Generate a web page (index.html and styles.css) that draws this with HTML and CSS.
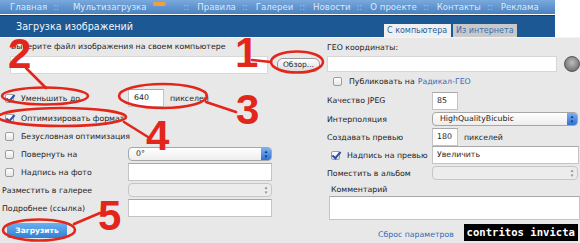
FILE: index.html
```html
<!DOCTYPE html>
<html lang="ru">

<head>
    <meta charset="UTF-8">
    <title>Загрузка изображений</title>
    <link rel="stylesheet" href="styles.css">
</head>

<body>
    <div class="page">
        <div class="topnav">
            <a>Главная</a><span class="sep">::</span>
            <a class="wide-gap">Мультизагрузка</a><span class="new">new</span><span class="sep">::</span>
            <a>Правила</a><span class="sep">::</span>
            <a>Галереи</a><span class="sep">::</span>
            <a>Новости</a><span class="sep">::</span>
            <a>О проекте</a><span class="sep">::</span>
            <a>Контакты</a><span class="sep">::</span>
            <a>Реклама</a>
        </div>

        <div class="header">
            <span class="title">Загрузка изображений</span>
            <div class="tabs">
                <span class="tab active">С компьютера</span>
                <span class="tab">Из интернета</span>
            </div>
        </div>

        <div class="panel">
            <div class="col-left">
                <div class="file-label">Выберите файл изображения на своем компьютере</div>
                <div class="file-row">
                    <span class="input file-input"></span>
                    <span class="btn-browse">Обзор...</span>
                </div>

                <div class="row first">
                    <label><span class="cb checked"></span>Уменьшить до</label>
                    <span class="input small">640</span><span class="unit">пикселей</span>
                </div>
                <div class="row">
                    <label><span class="cb checked"></span>Оптимизировать формат</label>
                </div>
                <div class="row">
                    <label><span class="cb"></span>Безусловная оптимизация</label>
                </div>
                <div class="row">
                    <label><span class="cb"></span>Повернуть на</label>
                    <span class="select wide">0°<span class="stepper">▴<br>▾</span></span>
                </div>
                <div class="row">
                    <label><span class="cb"></span>Надпись на фото</label>
                    <span class="input wide tall"></span>
                </div>
                <div class="row">
                    <label class="plain">Разместить в галерее</label>
                    <span class="select wide disabled"><span class="stepper">▴<br>▾</span></span>
                </div>
                <div class="row">
                    <label class="plain">Подробнее (ссылка)</label>
                    <span class="input wide tall"></span>
                </div>
                <div class="submit-row">
                    <span class="btn-upload">Загрузить</span>
                </div>
            </div>

            <div class="col-right">
                <div class="geo-label">ГЕО координаты:</div>
                <div class="geo-row">
                    <span class="input geo-input"></span>
                    <span class="geo-btn"></span>
                </div>
                <div class="publish">
                    <span class="cb"></span>Публиковать на <a>Радикал-ГЕО</a>
                </div>

                <div class="rrow first">
                    <label>Качество JPEG</label>
                    <span class="input tiny">85</span>
                </div>
                <div class="rrow">
                    <label>Интерполяция</label>
                    <span class="select full">HighQualityBicubic<span class="stepper">▴<br>▾</span></span>
                </div>
                <div class="rrow">
                    <label>Создавать превью</label>
                    <span class="input tiny">180</span><span class="unit">пикселей</span>
                </div>
                <div class="rrow">
                    <label class="with-cb"><span class="cb checked"></span>Надпись на превью</label>
                    <span class="input full tall">Увеличить</span>
                </div>
                <div class="rrow">
                    <label>Поместить в альбом</label>
                    <span class="select full disabled"><span class="stepper">▴<br>▾</span></span>
                </div>
                <div class="comment-label">Комментарий</div>
                <span class="input comment"></span>
                <div class="links">
                    <a>Сброс параметров</a>
                </div>
            </div>
        </div>

        <svg class="marks" width="580" height="243" viewBox="0 0 580 243">
            <g fill="none" stroke="#e3261b" stroke-width="2.6" stroke-linecap="round">
                <ellipse cx="297" cy="62" rx="26" ry="10.5" />
                <ellipse cx="45" cy="96" rx="43" ry="8.5" />
                <ellipse cx="163" cy="96" rx="44" ry="12" />
                <ellipse cx="62" cy="117" rx="64" ry="9" />
                <ellipse cx="39" cy="230" rx="36" ry="10.5" />
                <path d="M252 60 L271 62" />
                <path d="M26 68 L46 88" />
                <path d="M206 102 L236 112" />
                <path d="M124 122 L148 137" />
                <path d="M74 224 L100 213" />
            </g>
            <g fill="#e3261b" font-family="Liberation Sans, Arial, sans-serif" font-weight="bold" font-size="42">
                <text x="235" y="67">1</text>
                <text x="8" y="68">2</text>
                <text x="236" y="124">3</text>
                <text x="146" y="150">4</text>
                <text x="98" y="230">5</text>
            </g>
        </svg>

        <div class="watermark">contritos invicta</div>
    </div>
</body>

</html>
```

FILE: styles.css
```css
body {
    margin: 0;
    background: #ffffff;
    font-family: 'DejaVu Sans', Verdana, sans-serif;
    font-size: 7.8px;
    color: #222;
}

.page {
    position: relative;
    width: 580px;
    height: 243px;
    overflow: hidden;
}

.topnav {
    width: 545px;
    height: 14px;
    padding-left: 10px;
    background: linear-gradient(#7aa9dc, #4a82c2);
    color: #dde9f7;
    font-size: 8.6px;
    line-height: 14px;
    white-space: nowrap;
    display: flex;
    align-items: center;
}

.topnav .sep {
    color: #a9c7ea;
    margin: 0 8px 0 6px;
}

.topnav .sep:first-of-type {
    margin-right: 14px;
}

.topnav .new {
    width: 13px;
    height: 4px;
    margin: 2px 12px 0 6px;
    align-self: flex-start;
    background: #f0a03a;
    border-radius: 2px;
    font-size: 0;
}

.header {
    width: 555px;
    height: 21px;
    margin-top: 1px;
    background: #1c5893;
    border-top: 1px solid #0f3f72;
    display: flex;
    justify-content: space-between;
    align-items: flex-end;
}

.header .title {
    color: #f2f6fb;
    font-size: 9.6px;
    padding-left: 16px;
    align-self: center;
}

.tabs {
    display: flex;
    gap: 2px;
    margin-right: 38px;
}

.tab {
    height: 13px;
    line-height: 14px;
    padding: 0 3px;
    font-size: 8px;
    color: #3a6fb0;
    background: #c9c9c9;
    width: 58px;
}

.tab.active {
    width: 61px;
    color: #2a5e9e;
    background: #f0f0f0;
}

.panel {
    height: 206px;
    background: #e8e8e8;
    border-top: 1px solid #f4f4f4;
    display: flex;
    white-space: nowrap;
}

.col-left {
    width: 320px;
}

.col-right {
    width: 260px;
}

.file-label {
    padding: 4px 0 0 11px;
    height: 11px;
}

.file-row {
    display: flex;
    align-items: center;
    padding: 3px 0 0 10px;
}

.input {
    display: inline-block;
    box-sizing: border-box;
    background: #fff;
    border: 1px solid #c4c4c4;
    border-top-color: #a8a8a8;
    padding: 0 4px;
    line-height: 15px;
    height: 17px;
}

.file-input {
    width: 260px;
    height: 18px;
    border-color: #d8d8d8;
}

.btn-browse {
    margin-left: 9px;
    height: 12px;
    line-height: 12px;
    padding: 0 5px;
    border: 1px solid #9a9a9a;
    border-radius: 6px;
    background: linear-gradient(#ffffff, #dcdcdc);
    font-size: 7.5px;
}

.row {
    height: 18px;
    display: flex;
    align-items: center;
}

.row.first {
    height: 20px;
    margin-top: 14px;
    margin-bottom: 1px;
}

.row label {
    width: 123px;
    padding-left: 5px;
    display: flex;
    align-items: center;
}

.row label.plain {
    padding-left: 2px;
    width: 126px;
}

.cb {
    display: inline-block;
    box-sizing: border-box;
    width: 9px;
    height: 9px;
    margin-right: 7px;
    background: linear-gradient(#ffffff, #e6e6e6);
    border: 1px solid #9d9d9d;
    border-radius: 2px;
    position: relative;
    flex-shrink: 0;
}

.cb.checked::after {
    content: "";
    position: absolute;
    left: 2px;
    top: -2px;
    width: 3px;
    height: 7px;
    border: solid #2c4fa8;
    border-width: 0 2px 2px 0;
    transform: rotate(40deg);
}

.input.small {
    width: 36px;
    height: 18px;
    line-height: 16px;
    padding-left: 5px;
}

.input.tiny {
    width: 26px;
    height: 18px;
    line-height: 16px;
}

.unit {
    margin-left: 6px;
}

.input.wide {
    width: 144px;
}

.input.tall {
    height: 18px;
}

.select {
    position: relative;
    display: inline-block;
    box-sizing: border-box;
    height: 14px;
    line-height: 12px;
    padding-left: 7px;
    border: 1px solid #a6a6a6;
    border-radius: 4px;
    background: linear-gradient(#ffffff, #ededed);
}

.select.wide {
    width: 144px;
}

.select.full {
    width: 146px;
}

.select .stepper {
    position: absolute;
    right: 0;
    top: 0;
    bottom: 0;
    width: 10px;
    border-radius: 0 3px 3px 0;
    background: linear-gradient(#7fb0ef, #2f72d4);
    color: #0c2c66;
    font-size: 5px;
    line-height: 5px;
    text-align: center;
    padding-top: 1px;
    box-sizing: border-box;
}

.select.disabled {
    background: #ececec;
    border-color: #c6c6c6;
}

.select.disabled .stepper {
    background: none;
    color: #8a8a8a;
}

.submit-row {
    padding: 6px 0 0 7px;
}

.btn-upload {
    display: inline-block;
    width: 60px;
    height: 15px;
    line-height: 15px;
    text-align: center;
    color: #fff;
    font-weight: bold;
    font-size: 7.5px;
    border-radius: 3px;
    background: linear-gradient(#6ab0f0, #2f80d6);
}

.geo-label {
    padding: 5px 0 0 7px;
    height: 10px;
}

.geo-row {
    display: flex;
    align-items: center;
    padding: 3px 0 0 7px;
}

.geo-input {
    width: 239px;
    height: 16px;
    border-color: #d6d6d6;
}

.geo-btn {
    margin-left: 7px;
    width: 14px;
    height: 14px;
    border-radius: 50%;
    border: 1px solid #555;
    background: radial-gradient(circle at 50% 40%, #bdbdbd, #5b5b5b);
    flex-shrink: 0;
}

.publish {
    display: flex;
    align-items: center;
    padding: 3px 0 0 13px;
    height: 12px;
}

.publish a {
    color: #2f6bb6;
    margin-left: 3px;
}

.rrow {
    height: 18px;
    display: flex;
    align-items: center;
    padding-left: 7px;
}

.rrow.first {
    height: 19px;
    margin-top: 4px;
}

.rrow label {
    width: 105px;
    display: flex;
    align-items: center;
}

.rrow label.with-cb {
    padding-left: 4px;
    width: 101px;
}

.input.full {
    width: 147px;
}

.comment-label {
    padding: 3px 0 0 11px;
    height: 9px;
}

.input.comment {
    margin: 2px 0 0 9px;
    width: 251px;
    height: 24px;
}

.links {
    padding: 8px 0 0 58px;
}

.links a {
    color: #2f6bb6;
}

.marks {
    position: absolute;
    left: 0;
    top: 0;
    pointer-events: none;
}

.watermark {
    position: absolute;
    right: 2px;
    bottom: 2px;
    height: 17px;
    line-height: 17px;
    padding: 0 3px;
    background: #000;
    color: #fff;
    font-family: 'DejaVu Sans Mono', monospace;
    font-weight: bold;
    font-size: 10.6px;
}
```
